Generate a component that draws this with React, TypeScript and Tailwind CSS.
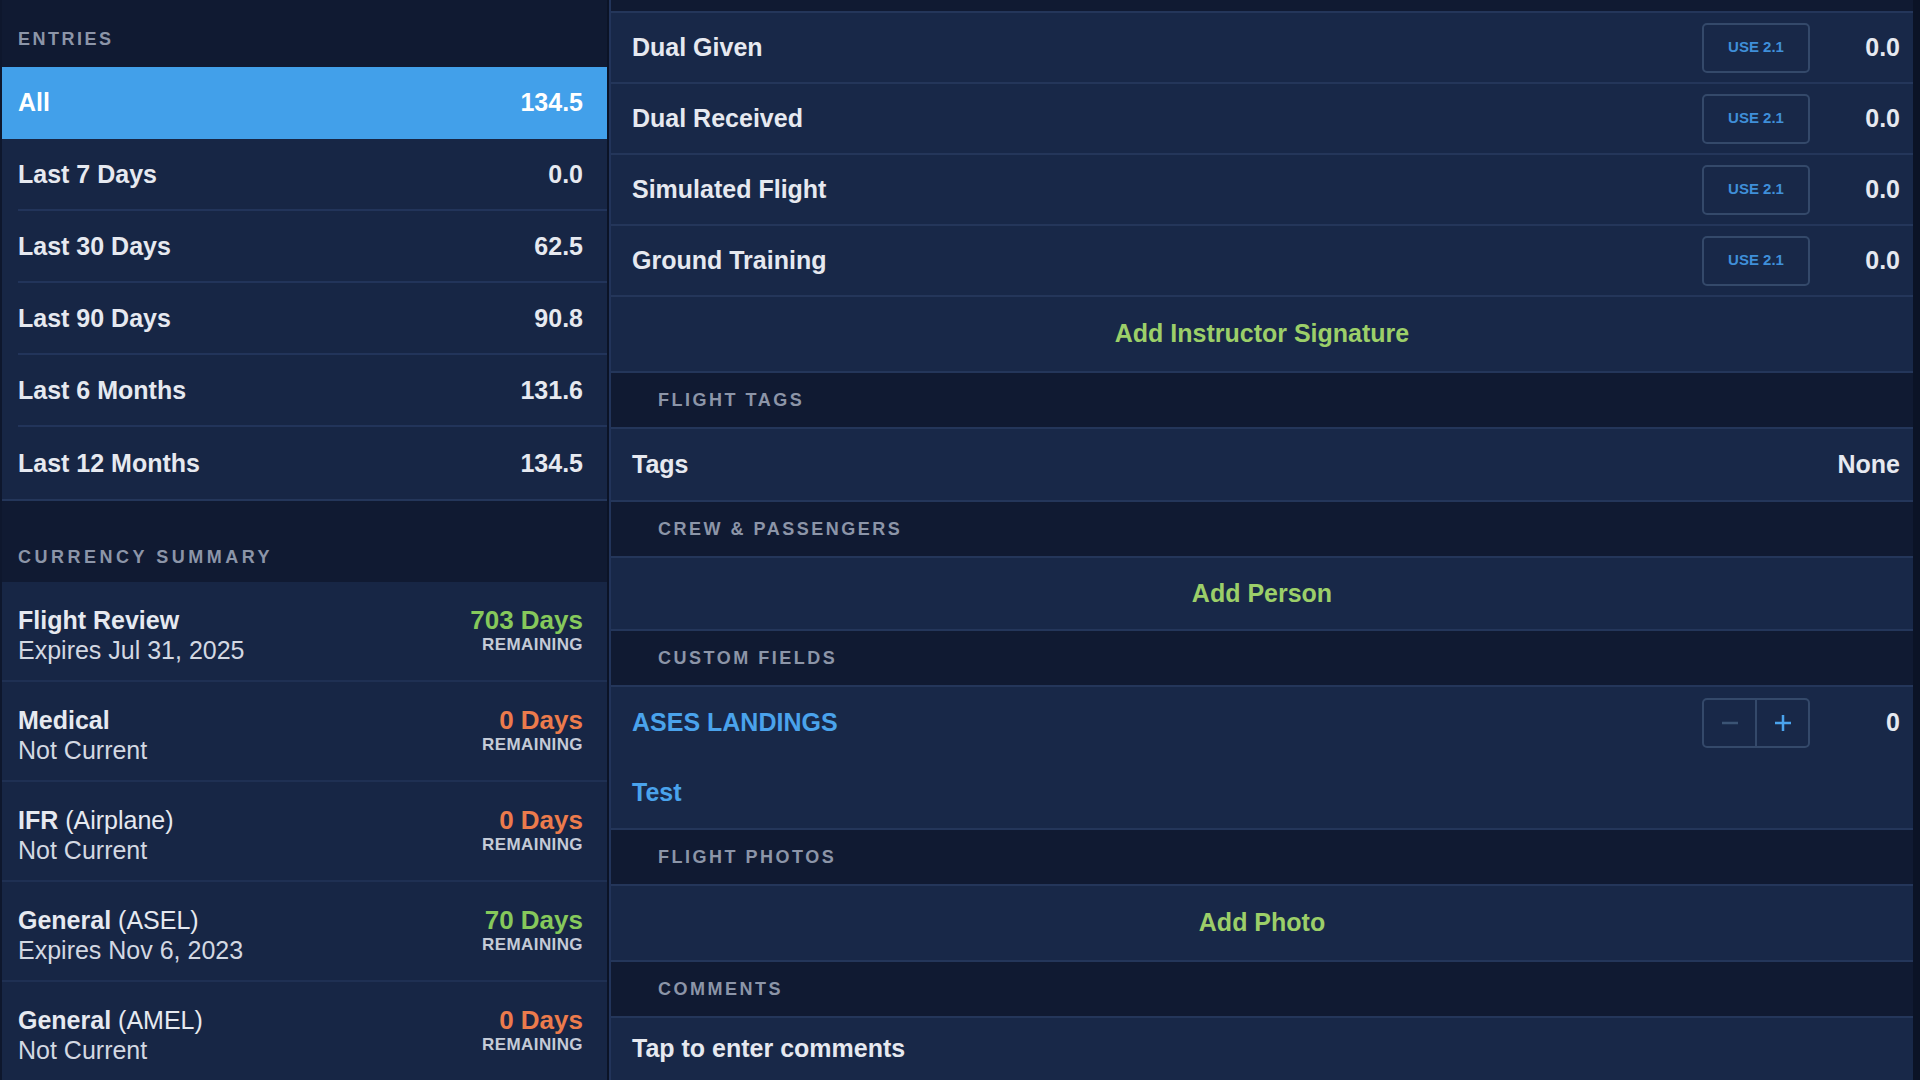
const entries = [
  { label: "All", value: "134.5" },
  { label: "Last 7 Days", value: "0.0" },
  { label: "Last 30 Days", value: "62.5" },
  { label: "Last 90 Days", value: "90.8" },
  { label: "Last 6 Months", value: "131.6" },
  { label: "Last 12 Months", value: "134.5" },
];

const currency = [
  { sub: "Expires Jul 31, 2025", days: "703 Days", ok: true, bold: "Flight Review", rest: "" },
  { sub: "Not Current", days: "0 Days", ok: false, bold: "Medical", rest: "" },
  { sub: "Not Current", days: "0 Days", ok: false, bold: "IFR", rest: " (Airplane)" },
  { sub: "Expires Nov 6, 2023", days: "70 Days", ok: true, bold: "General", rest: " (ASEL)" },
  { sub: "Not Current", days: "0 Days", ok: false, bold: "General", rest: " (AMEL)" },
];

const timeRows = ["Dual Given", "Dual Received", "Simulated Flight", "Ground Training"];

function SectionHeader({ title }: { title: string }) {
  return (
    <div className="flex h-[56px] shrink-0 items-center border-b-2 border-[#24365a] bg-[#101a32] pl-[47px]">
      <span className="text-[18px] font-bold uppercase tracking-[2.5px] text-[#8c95a8]">
        {title}
      </span>
    </div>
  );
}

function ActionRow({ label, height }: { label: string; height: string }) {
  return (
    <div
      className={`flex ${height} shrink-0 items-center justify-center border-b-2 border-[#24365a] bg-[#182848]`}
    >
      <span className="text-[25px] font-bold text-[#9ccf69]">{label}</span>
    </div>
  );
}

export default function App() {
  return (
    <div className="flex h-[1080px] w-[1920px] overflow-hidden bg-[#0b1326] font-['Liberation_Sans',Arial,sans-serif] antialiased">
      {/* left column */}
      <div className="flex w-[607px] shrink-0 flex-col border-l-2 border-[#0e172d] bg-[#172645]">
        <div className="flex h-[67px] shrink-0 items-center bg-[#101a32] pl-[16px] pt-[12px]">
          <span className="text-[18px] font-bold tracking-[2.5px] text-[#8c95a8]">ENTRIES</span>
        </div>

        {entries.map((e, i) => (
          <div key={e.label} className={i === 0 ? "h-[72px] shrink-0 bg-[#42a0ea]" : "h-[72px] shrink-0 pl-[16px]"}>
            <div
              className={
                i === 0
                  ? "flex h-full items-center justify-between pl-[16px] pr-[24px] text-white"
                  : i === entries.length - 1
                    ? "flex h-full items-center justify-between pr-[24px] pt-[2px] text-[#e6e9f0]"
                    : "flex h-full items-center justify-between border-b-2 border-[#22345a] pr-[24px] pt-[2px] text-[#e6e9f0]"
              }
            >
              <span className="text-[25px] font-bold">{e.label}</span>
              <span className="text-[25px] font-bold">{e.value}</span>
            </div>
          </div>
        ))}

        <div className="flex h-[83px] shrink-0 items-end border-t-2 border-[#24365a] bg-[#101a32] pb-[11px] pl-[16px]">
          <span className="text-[18px] font-bold tracking-[3.5px] text-[#8c95a8]">
            CURRENCY SUMMARY
          </span>
        </div>

        {currency.map((c) => (
          <div
            key={c.bold + c.rest + c.sub}
            className="flex h-[100px] shrink-0 items-start justify-between border-b-2 border-[#1f3053] pl-[16px] pr-[24px] pt-[23px]"
          >
            <div className="flex flex-col leading-[30px]">
              <span className="text-[25px] text-[#e6e9f0]">
                <span className="font-bold">{c.bold}</span>
                {c.rest}
              </span>
              <span className="text-[25px] text-[#d3d8e2]">{c.sub}</span>
            </div>
            <div className="flex flex-col items-end pt-[1px]">
              <span
                className={
                  c.ok
                    ? "text-[26px] font-bold leading-[28px] text-[#86c95b]"
                    : "text-[26px] font-bold leading-[28px] text-[#ec7b4c]"
                }
              >
                {c.days}
              </span>
              <span className="mt-[1px] text-[17px] font-bold leading-[20px] tracking-[0.4px] text-[#c5cbd7]">
                REMAINING
              </span>
            </div>
          </div>
        ))}
      </div>

      <div className="w-[2px] shrink-0 bg-[#0b1326]" />

      {/* right column */}
      <div className="flex min-w-0 flex-1 flex-col border-l-2 border-[#22345a] bg-[#182848]">
        <div className="h-[13px] shrink-0 border-b-2 border-[#24365a] bg-[#101a32]" />

        {timeRows.map((r) => (
          <div
            key={r}
            className="flex h-[71px] shrink-0 items-center border-b-2 border-[#24365a] pl-[21px] pr-[13px]"
          >
            <span className="flex-1 text-[25px] font-bold text-[#e6e9f0]">{r}</span>
            <button className="flex h-[50px] w-[108px] items-center justify-center rounded-[5px] border-2 border-[#34496a] text-[15px] font-bold text-[#3f8fd9]">
              USE 2.1
            </button>
            <span className="w-[90px] text-right text-[25px] font-bold text-[#e6e9f0]">0.0</span>
          </div>
        ))}

        <ActionRow label="Add Instructor Signature" height="h-[76px]" />
        <SectionHeader title="Flight Tags" />

        <div className="flex h-[73px] shrink-0 items-center justify-between border-b-2 border-[#24365a] pl-[21px] pr-[13px]">
          <span className="text-[25px] font-bold text-[#e6e9f0]">Tags</span>
          <span className="text-[25px] font-bold text-[#e6e9f0]">None</span>
        </div>

        <SectionHeader title="Crew & Passengers" />
        <ActionRow label="Add Person" height="h-[73px]" />
        <SectionHeader title="Custom Fields" />

        <div className="flex h-[71px] shrink-0 items-center pl-[21px] pr-[13px]">
          <span className="flex-1 text-[25px] font-bold text-[#4aa3ec]">ASES LANDINGS</span>
          <div className="flex h-[50px] w-[108px] rounded-[5px] border-2 border-[#34496a]">
            <div className="flex flex-1 items-center justify-center border-r-2 border-[#34496a]">
              <svg width="22" height="22" viewBox="0 0 22 22">
                <path d="M3 11h16" stroke="#3b5475" strokeWidth="2.5" />
              </svg>
            </div>
            <div className="flex flex-1 items-center justify-center">
              <svg width="22" height="22" viewBox="0 0 22 22">
                <path d="M3 11h16M11 3v16" stroke="#4aa3ec" strokeWidth="2.5" />
              </svg>
            </div>
          </div>
          <span className="w-[90px] text-right text-[25px] font-bold text-[#e6e9f0]">0</span>
        </div>

        <div className="flex h-[72px] shrink-0 items-center border-b-2 border-[#24365a] pl-[21px]">
          <span className="text-[25px] font-bold text-[#4aa3ec]">Test</span>
        </div>

        <SectionHeader title="Flight Photos" />
        <ActionRow label="Add Photo" height="h-[76px]" />
        <SectionHeader title="Comments" />

        <div className="flex h-[62px] shrink-0 items-center pl-[21px]">
          <span className="text-[25px] font-bold text-[#e6e9f0]">Tap to enter comments</span>
        </div>
      </div>

      <div className="w-[7px] shrink-0 bg-[#0b1326]" />
    </div>
  );
}
